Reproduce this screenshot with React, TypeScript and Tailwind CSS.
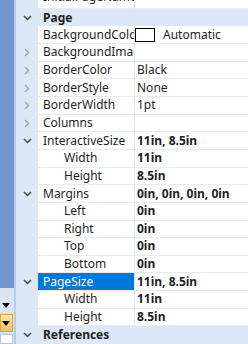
type Row = {
  name: string
  value?: string
  category?: boolean
  chevron?: 'down' | 'right'
  indent?: boolean
  bold?: boolean
  swatch?: boolean
  selected?: boolean
}

const rows: Row[] = [
  { name: 'Page', category: true, chevron: 'down' },
  { name: 'BackgroundColor', value: 'Automatic', swatch: true },
  { name: 'BackgroundImage', chevron: 'right' },
  { name: 'BorderColor', chevron: 'right', value: 'Black' },
  { name: 'BorderStyle', chevron: 'right', value: 'None' },
  { name: 'BorderWidth', chevron: 'right', value: '1pt' },
  { name: 'Columns', chevron: 'right' },
  { name: 'InteractiveSize', chevron: 'down', value: '11in, 8.5in', bold: true },
  { name: 'Width', indent: true, value: '11in', bold: true },
  { name: 'Height', indent: true, value: '8.5in', bold: true },
  { name: 'Margins', chevron: 'down', value: '0in, 0in, 0in, 0in', bold: true },
  { name: 'Left', indent: true, value: '0in', bold: true },
  { name: 'Right', indent: true, value: '0in', bold: true },
  { name: 'Top', indent: true, value: '0in', bold: true },
  { name: 'Bottom', indent: true, value: '0in', bold: true },
  { name: 'PageSize', chevron: 'down', value: '11in, 8.5in', bold: true, selected: true },
  { name: 'Width', indent: true, value: '11in', bold: true },
  { name: 'Height', indent: true, value: '8.5in', bold: true },
  { name: 'References', category: true, chevron: 'down' },
]

function Chevron({ dir }: { dir?: 'down' | 'right' }) {
  if (!dir) return null
  if (dir === 'down') {
    return (
      <svg width="9" height="6" viewBox="0 0 9 6">
        <path d="M1 1 L4.5 4.5 L8 1" fill="none" stroke="#4a4a4a" strokeWidth="1.5" />
      </svg>
    )
  }
  return (
    <svg width="6" height="9" viewBox="0 0 6 9">
      <path d="M1 1 L4.5 4.5 L1 8" fill="none" stroke="#a6a6a6" strokeWidth="1.5" />
    </svg>
  )
}

function GridRow({ row }: { row: Row }) {
  if (row.category) {
    return (
      <div className="flex h-[18px] bg-[#dde8f6]">
        <div className="w-[22px] flex items-center justify-center">
          <Chevron dir={row.chevron} />
        </div>
        <div className="pl-[5px] flex items-center font-bold text-[#1e1e1e]">{row.name}</div>
      </div>
    )
  }

  return (
    <div className="flex h-[18px]">
      <div className="w-[22px] shrink-0 bg-[#dde8f6] flex items-center justify-center">
        <Chevron dir={row.chevron} />
      </div>
      <div
        className={`w-[96px] shrink-0 flex items-center overflow-hidden whitespace-nowrap border-b border-[#e6ebf1] ${
          row.indent ? 'pl-[26px]' : 'pl-[5px]'
        } ${row.selected ? 'bg-[#0078d7] text-white' : 'bg-white text-[#1e1e1e]'}`}
      >
        {row.name}
      </div>
      <div className="w-px shrink-0 bg-[#dce6f2]" />
      <div
        className={`flex-1 flex items-center gap-[8px] whitespace-nowrap bg-white border-b border-[#e6ebf1] text-[#1e1e1e] ${
          row.swatch ? 'pl-0' : 'pl-[2px]'
        } ${row.bold ? 'font-bold' : ''}`}
      >
        {row.swatch && <div className="w-[20px] h-[14px] border border-black bg-white" />}
        {row.value}
      </div>
    </div>
  )
}

export default function App() {
  return (
    <div
      className="w-[248px] h-[344px] overflow-hidden flex bg-white text-[12px] leading-none"
      style={{ fontFamily: '"Noto Sans", "Open Sans", sans-serif' }}
    >
      {/* left docked pane */}
      <div className="w-[14px] shrink-0 flex flex-col">
        <div className="h-[288px] bg-[#7096cd]" />
        <div className="flex-1 bg-[#d9e5f5] flex flex-col">
          <div className="h-[15px]" />
          <div className="pl-[2px] h-[5px] flex items-start">
            <div className="w-0 h-0 border-l-[4px] border-r-[4px] border-t-[5px] border-l-transparent border-r-transparent border-t-black" />
          </div>
          <div className="h-[6px]" />
          <div className="h-[18px] w-[13px] border border-[#d7a24a] bg-gradient-to-b from-[#fde7b3] to-[#f6c15c] flex items-center pl-[1px]">
            <div className="w-0 h-0 border-l-[4px] border-r-[4px] border-t-[5px] border-l-transparent border-r-transparent border-t-black" />
          </div>
          <div className="h-[2px]" />
          <div className="flex-1 w-[13px] border border-[#b9c4d2] bg-white" />
        </div>
      </div>
      <div className="w-[2px] shrink-0 bg-[#b9cde9]" />

      {/* property grid */}
      <div className="flex-1 flex flex-col">
        <div className="flex h-[9px] overflow-hidden">
          <div className="w-[22px] shrink-0 bg-[#dde8f6]" />
          <div className="w-[96px] shrink-0 pl-[5px] bg-white border-b border-[#e6ebf1] overflow-hidden whitespace-nowrap text-[#1e1e1e]">
            <div className="-mt-[12px] h-[18px] flex items-center">InitialPageName</div>
          </div>
          <div className="w-px shrink-0 bg-[#dce6f2]" />
          <div className="flex-1 bg-white border-b border-[#e6ebf1]" />
        </div>
        {rows.map((row, i) => (
          <GridRow key={i} row={row} />
        ))}
      </div>
    </div>
  )
}
